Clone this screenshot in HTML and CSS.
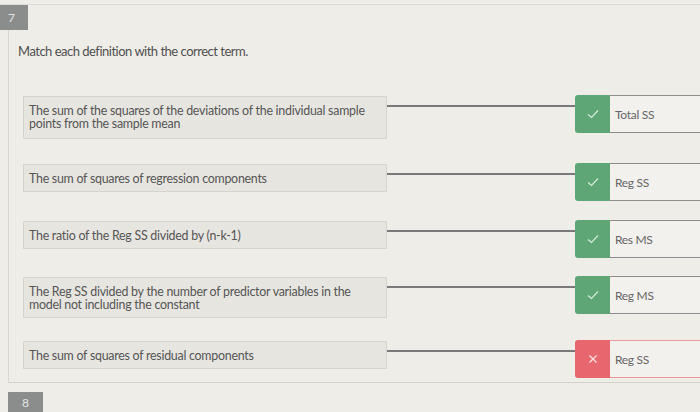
FILE: index.html
```html
<!DOCTYPE html>
<html lang="en">
<head>
    <meta charset="UTF-8">
    <meta name="viewport" content="width=device-width, initial-scale=1.0">
    <title>Matching question</title>
    <link rel="stylesheet" href="styles.css">
</head>
<body>
    <div class="topline">
        <div class="num">7</div>
    </div>

    <div class="question">
        <p class="prompt">Match each definition with the correct term.</p>

        <div class="rows">
            <div class="row">
                <div class="def">The sum of the squares of the deviations of the individual sample points from the sample mean</div>
                <div class="wire"></div>
                <div class="answer ok">
                    <span class="mark"><svg width="12" height="10" viewBox="0 0 12 10"><path d="M1 5.5 L4.5 8.5 L11 1.5" fill="none" stroke="currentColor" stroke-width="1.2"/></svg></span>
                    <span class="term">Total SS</span>
                </div>
            </div>

            <div class="row">
                <div class="def">The sum of squares of regression components</div>
                <div class="wire"></div>
                <div class="answer ok">
                    <span class="mark"><svg width="12" height="10" viewBox="0 0 12 10"><path d="M1 5.5 L4.5 8.5 L11 1.5" fill="none" stroke="currentColor" stroke-width="1.2"/></svg></span>
                    <span class="term">Reg SS</span>
                </div>
            </div>

            <div class="row">
                <div class="def">The ratio of the Reg SS divided by (n-k-1)</div>
                <div class="wire"></div>
                <div class="answer ok">
                    <span class="mark"><svg width="12" height="10" viewBox="0 0 12 10"><path d="M1 5.5 L4.5 8.5 L11 1.5" fill="none" stroke="currentColor" stroke-width="1.2"/></svg></span>
                    <span class="term">Res MS</span>
                </div>
            </div>

            <div class="row">
                <div class="def">The Reg SS divided by the number of predictor variables in the model not including the constant</div>
                <div class="wire"></div>
                <div class="answer ok">
                    <span class="mark"><svg width="12" height="10" viewBox="0 0 12 10"><path d="M1 5.5 L4.5 8.5 L11 1.5" fill="none" stroke="currentColor" stroke-width="1.2"/></svg></span>
                    <span class="term">Reg MS</span>
                </div>
            </div>

            <div class="row">
                <div class="def">The sum of squares of residual components</div>
                <div class="wire"></div>
                <div class="answer wrong">
                    <span class="mark"><svg width="10" height="10" viewBox="0 0 10 10"><path d="M1.5 1.5 L8.5 8.5 M8.5 1.5 L1.5 8.5" fill="none" stroke="currentColor" stroke-width="1.2"/></svg></span>
                    <span class="term">Reg SS</span>
                </div>
            </div>
        </div>
    </div>

    <div class="next">
        <div class="num">8</div>
    </div>
</body>
</html>
```

FILE: styles.css
```css
body {
    margin: 0;
    padding-top: 5px;
    background-color: #efede8;
    font-family: Lato, "Open Sans", sans-serif;
    color: #5e5e5e;
    width: 700px;
    height: 412px;
    overflow: hidden;
}

.topline {
    border-top: 1px solid #dddbd6;
    margin-top: -1px;
}

.num {
    width: 28px;
    height: 25px;
    background-color: #8b8d8d;
    color: #e4e4e4;
    font-size: 12px;
    line-height: 25px;
    padding-left: 8px;
    box-sizing: border-box;
}

.question {
    margin-left: 8px;
    padding-top: 1px;
    border-left: 1px solid #d9d7d2;
    border-bottom: 1px solid #d3d1cc;
    height: 353px;
    box-sizing: border-box;
}

.prompt {
    margin: 12px 0 0 9px;
    font-size: 13px;
    color: #505050;
    letter-spacing: -0.5px;
}

.rows {
    margin-top: 37px;
    padding-left: 14px;
}

.row {
    display: flex;
    align-items: flex-start;
}

.row:nth-child(1) { margin-bottom: 25px; }
.row:nth-child(2) { margin-bottom: 20px; }
.row:nth-child(3) { margin-bottom: 19px; }
.row:nth-child(4) { margin-bottom: 23px; }

.def {
    width: 364px;
    min-height: 28px;
    box-sizing: border-box;
    padding: 6px 5px;
    background-color: #e7e5e0;
    border: 1px solid #d6d4cf;
    font-size: 12.4px;
    line-height: 13px;
    color: #555;
    letter-spacing: -0.25px;
    display: flex;
    align-items: center;
}

.row:nth-child(1) .def {
    height: 43px;
    align-items: flex-start;
    padding-top: 7px;
}

.row:nth-child(4) .def {
    height: 41px;
    align-items: flex-start;
    padding-top: 7px;
    padding-right: 16px;
}

.wire {
    flex: 1;
    height: 0;
    border-top: 2px solid #7a7a7a;
    margin-top: 9px;
}

.answer {
    display: flex;
    width: 125px;
    height: 38px;
    margin-top: -1px;
}

.mark {
    width: 35px;
    border-radius: 3px 0 0 3px;
    color: #d7ecdc;
    display: flex;
    align-items: center;
    justify-content: center;
}

.term {
    flex: 1;
    border-top: 1px solid #8d8d8d;
    border-bottom: 1px solid #8d8d8d;
    background-color: #f2f1ed;
    font-size: 12px;
    color: #666;
    letter-spacing: -0.3px;
    padding-left: 5px;
    display: flex;
    align-items: center;
}

.ok .mark {
    background-color: #5ea676;
}

.wrong .mark {
    background-color: #e8666d;
    color: #fbe3e4;
}

.wrong .term {
    border-color: #e49a9e;
}

.next {
    padding: 9px 0 0 8px;
}

.next .num {
    width: 35px;
    height: 22px;
    line-height: 22px;
    text-align: center;
    padding-left: 0;
}
```
